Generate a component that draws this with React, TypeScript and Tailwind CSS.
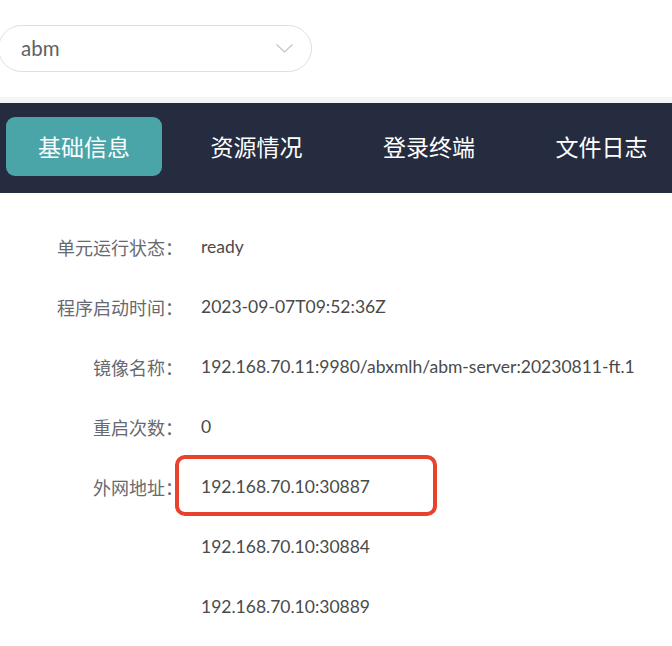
import React from 'react';

const tabs = ['基础信息', '资源情况', '登录终端', '文件日志'];

const rows: { label: string; value: string; marked?: boolean }[] = [
  { label: '单元运行状态：', value: 'ready' },
  { label: '程序启动时间：', value: '2023-09-07T09:52:36Z' },
  { label: '镜像名称：', value: '192.168.70.11:9980/abxmlh/abm-server:20230811-ft.1' },
  { label: '重启次数：', value: '0' },
  { label: '外网地址：', value: '192.168.70.10:30887', marked: true },
  { label: '', value: '192.168.70.10:30884' },
  { label: '', value: '192.168.70.10:30889' },
];

const cjk = "font-['Noto_Sans_CJK_SC',sans-serif]";
const latin = "font-['Lato','Noto_Sans_CJK_SC',sans-serif]";

export default function App() {
  return (
    <div className="w-[672px] h-[646px] overflow-hidden bg-white">
      {/* unit selector */}
      <div className="pt-[25px] pb-[25px]">
        <div className="ml-[-2px] w-[314px] h-[47px] rounded-full border border-[#dcdfe6] flex items-center justify-between pl-[22px] pr-[18px]">
          <span className={`${latin} text-[20.5px] text-[#606266]`}>abm</span>
          <svg width="17" height="9" viewBox="0 0 17 9" fill="none">
            <path d="M0.5 0.5 L8.5 8 L16.5 0.5" stroke="#c0c4cc" strokeWidth="1.2" />
          </svg>
        </div>
      </div>
      <div className="h-[6px] bg-[#f4f5f7]" />

      {/* tabs */}
      <div className="h-[90px] bg-[#262c3f] flex items-start pt-[14px] pl-[6px] gap-[16.5px]">
        {tabs.map((t, i) => (
          <div
            key={t}
            className={`${cjk} w-[156px] h-[59px] shrink-0 rounded-[9px] flex items-center justify-center text-[23px] text-white ${i === 0 ? 'bg-[#4aa5a9]' : ''}`}
          >
            {t}
          </div>
        ))}
      </div>

      {/* details */}
      <div className="pt-[24px]">
        {rows.map((r, i) => (
          <div key={i} className="relative h-[60px] flex items-center">
            <div className={`${cjk} w-[183px] text-right text-[18px] text-[#666a70] shrink-0`}>{r.label}</div>
            <div className={`${latin} ml-[18px] text-[17.5px] text-[#4a4a4a] whitespace-nowrap`}>{r.value}</div>
            {r.marked && (
              <div className="absolute left-[175px] top-[-2px] w-[262px] h-[61px] rounded-[10px] border-[4.5px] border-[#e8412c]" />
            )}
          </div>
        ))}
      </div>
    </div>
  );
}
